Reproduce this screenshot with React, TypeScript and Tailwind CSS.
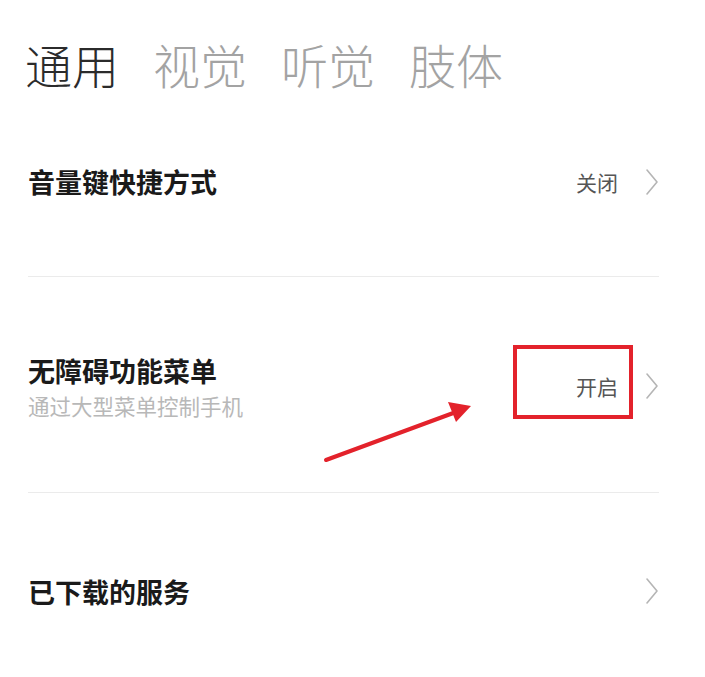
import React from 'react';

const tabs = ['通用', '视觉', '听觉', '肢体'];

function Chevron() {
    return (
        <svg width="14" height="28" viewBox="0 0 14 28" className="shrink-0">
            <polyline points="2,2 12,14 2,26" fill="none" stroke="#b5b5b5" strokeWidth="1.6" strokeLinejoin="round" strokeLinecap="round" />
        </svg>
    );
}

function Row({ title, sub, value, h }: { title: string; sub?: string; value?: string; h: string }) {
    return (
        <div className={`flex items-center justify-between ${h}`}>
            <div className="flex flex-col">
                <p className="text-[27px] leading-[39px] font-bold text-[#1a1a1a]">{title}</p>
                {sub && <p className="text-[21.5px] leading-[31px] text-[#b8b8b8]">{sub}</p>}
            </div>
            <div className="flex items-center gap-[27px]">
                {value && <span className="text-[21px] leading-[30px] text-[#555]">{value}</span>}
                <Chevron />
            </div>
        </div>
    );
}

export default function App() {
    return (
        <div className="relative w-[705px] h-[677px] overflow-hidden bg-white font-['Noto_Sans_CJK_SC',sans-serif]">
            {/* Tabs */}
            <div className="flex gap-[34px] pl-[25px] pt-[35px]">
                {tabs.map((t, i) => (
                    <span key={t} className={`text-[47px] leading-[58px] font-light ${i === 0 ? 'text-[#2b2b2b]' : 'text-[#a3a3a3]'}`}>{t}</span>
                ))}
            </div>

            {/* List */}
            <div className="pl-[28px] pr-[46px]">
                <Row title="音量键快捷方式" value="关闭" h="h-[183px] pb-[6px]" />
                <div className="h-px bg-[#ebebeb]" />
                <Row title="无障碍功能菜单" sub="通过大型菜单控制手机" value="开启" h="h-[215px] pt-[2px]" />
                <div className="h-px bg-[#ebebeb]" />
                <Row title="已下载的服务" h="h-[196px]" />
            </div>

            {/* Annotation */}
            <div className="absolute left-[513px] top-[345px] w-[120px] h-[74px] border-[4px] border-[#e3222b]" />
            <svg className="absolute left-0 top-0" width="705" height="677" viewBox="0 0 705 677">
                <line x1="326" y1="460" x2="456" y2="412" stroke="#e3222b" strokeWidth="4" strokeLinecap="round" />
                <polygon points="471,406 448,402 456,422" fill="#e3222b" />
            </svg>
        </div>
    );
}
